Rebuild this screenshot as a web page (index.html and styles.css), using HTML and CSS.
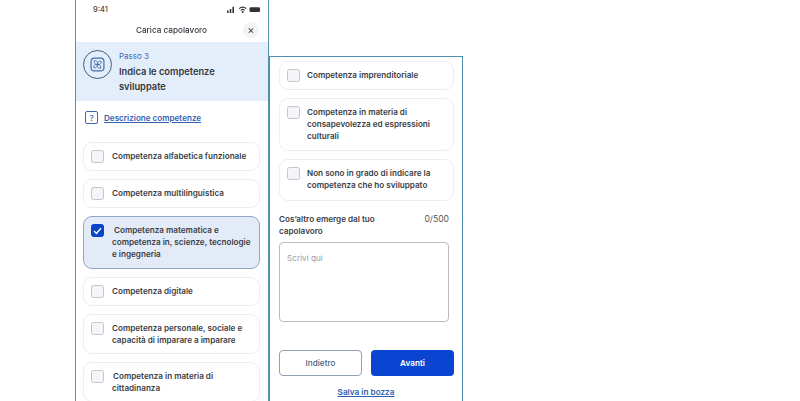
FILE: index.html
```html
<!DOCTYPE html>
<html lang="it">
<head>
<meta charset="utf-8">
<title>Carica capolavoro</title>
<link rel="stylesheet" href="styles.css">
</head>
<body>
<div class="stage">
  <section class="phone phone-left">
    <div class="status">
      <span class="time">9:41</span>
      <svg class="status-icons" width="33" height="7" viewBox="0 0 33 7">
        <rect x="0" y="4.500" width="1.600" height="2.500" fill="#333"/><rect x="2.700" y="3" width="1.600" height="4" fill="#333"/><rect x="5.400" y="0.800" width="1.600" height="6.200" fill="#333"/>
        <path d="M12.200 2.600a5 5 0 0 1 7 0M13.800 4.300a2.800 2.800 0 0 1 3.800 0" fill="none" stroke="#333" stroke-width="1.100"/><circle cx="15.700" cy="6" r="1" fill="#333"/>
        <rect x="22.500" y="1.200" width="10.500" height="4.800" rx="1.200" fill="#333"/>
      </svg>
    </div>
    <header class="title-bar">
      <h1 class="title">Carica capolavoro</h1>
      <span class="close">×</span>
    </header>
    <div class="step">
      <span class="step-ring">
        <svg width="15" height="15" viewBox="0 0 14 14" fill="none" stroke="#3f6aa8" stroke-width="1.100">
          <rect x="1" y="1" width="12" height="12" rx="3"/>
          <path d="M7 7C4.500 7 3.500 5.500 4 3.500 6 3 7.500 4.500 7 7ZM7 7C7 4.500 8.500 3.500 10.500 4 11 6 9.500 7.500 7 7ZM7 7C9.500 7 10.500 8.500 10 10.500 8 11 6.500 9.500 7 7ZM7 7C7 9.500 5.500 10.500 3.500 10 3 8 4.500 6.500 7 7Z" stroke-width=".8"/>
        </svg>
      </span>
      <div class="step-text">
        <p class="step-num">Passo 3</p>
        <h2 class="step-title">Indica le competenze sviluppate</h2>
      </div>
    </div>
    <a class="desc-link">
      <span class="help">?</span>
      <span class="link-text">Descrizione competenze</span>
    </a>
    <ul class="cards cards-left">
      <li class="card"><span class="check"></span><span class="label">Competenza alfabetica funzionale</span></li>
      <li class="card"><span class="check"></span><span class="label">Competenza multilinguistica</span></li>
      <li class="card card-selected">
        <span class="check check-on"><svg width="9" height="8" viewBox="0 0 9 8"><path d="M1 4l2.400 2.400L8 1.200" fill="none" stroke="#fff" stroke-width="1.400"/></svg></span>
        <span class="label label-indent">Competenza matematica e competenza in, scienze, tecnologie e ingegneria</span>
      </li>
      <li class="card"><span class="check"></span><span class="label">Competenza digitale</span></li>
      <li class="card"><span class="check"></span><span class="label">Competenza personale, sociale e capacità di imparare a imparare</span></li>
      <li class="card"><span class="check"></span><span class="label label-nudge">Competenza in materia di cittadinanza</span></li>
    </ul>
  </section>

  <section class="phone phone-right">
    <ul class="cards cards-right">
      <li class="card"><span class="check"></span><span class="label">Competenza imprenditoriale</span></li>
      <li class="card"><span class="check"></span><span class="label">Competenza in materia di consapevolezza ed espressioni culturali</span></li>
      <li class="card card-last"><span class="check"></span><span class="label">Non sono in grado di indicare la competenza che ho sviluppato</span></li>
    </ul>
    <div class="field-head">
      <span class="field-label">Cos’altro emerge dal tuo capolavoro</span>
      <span class="counter">0/500</span>
    </div>
    <div class="textarea">Scrivi qui</div>
    <div class="buttons">
      <button class="btn btn-ghost">Indietro</button>
      <button class="btn btn-primary">Avanti</button>
    </div>
    <a class="draft">Salva in bozza</a>
  </section>
</div>
</body>
</html>
```
FILE: styles.css
```css
* { box-sizing: border-box; margin: 0; padding: 0; }
html, body { width: 800px; height: 401px; overflow: hidden; background: #fff; }
body { font-family: Inter, "Liberation Sans", sans-serif; color: #33363d; }
ul { list-style: none; }

.stage { display: flex; align-items: flex-start; padding-left: 75px; height: 401px; overflow: hidden; filter: blur(.35px); }

.phone { width: 194px; height: 420px; border: 1.5px solid #4f8fb0; border-top: 0; background: #fff; flex: none; }
.phone-right { margin-top: 56px; border-top: 1.5px solid #4f8fb0; }

.status { display: flex; justify-content: space-between; align-items: center; height: 18px; padding: 0 8px 0 17px; }
.time { font-size: 7.500px; font-weight: 500; color: #444; }

.title-bar { position: relative; height: 24px; display: flex; align-items: center; justify-content: center; }
.title { font-size: 8.200px; font-weight: 500; color: #33363d; margin-left: -1px; }
.close { position: absolute; right: 9px; top: 4px; width: 16px; height: 16px; border-radius: 50%; background: #f3f4f6; display: flex; align-items: center; justify-content: center; font-size: 11px; color: #444; }

.step { display: flex; gap: 7px; height: 59px; background: #e4eefa; padding: 8px 8px 0 7px; }
.step-ring { width: 29px; height: 29px; border: 1.200px solid #3e5f80; border-radius: 50%; display: flex; align-items: center; justify-content: center; flex: none; }
.step-num { font-size: 8px; line-height: 12px; color: #3f68b4; }
.step-title { font-size: 9.300px; line-height: 15px; font-weight: 600; color: #33363d; width: 125px; margin-top: 1.500px; }

.desc-link { display: flex; align-items: center; gap: 6px; height: 13px; margin: 10px 0 18px 9px; }
.help { width: 13px; height: 13px; border: 1px solid #3f68b4; border-radius: 2px; display: flex; align-items: center; justify-content: center; font-size: 8px; font-weight: 500; color: #3f68b4; }
.link-text { font-size: 8.100px; font-weight: 600; color: #2f5fae; text-decoration: underline; }

.cards { display: flex; flex-direction: column; gap: 8px; }
.cards-left { margin-left: 7px; width: 177px; }
.cards-right { margin: 4px 0 0 9px; width: 175px; }

.card { display: flex; gap: 8px; padding: 7px; border: 1px solid #eceef1; border-radius: 9px; background: #fff; min-height: 29px; align-items: flex-start; }
.cards-right .card { gap: 7px; }
.card-selected { background: #e3ebf9; border-color: #8fa6c4; }
.card-last { padding-bottom: 9px; }

.check { width: 13px; height: 13px; border: 1px solid #c3c6cd; border-radius: 2.500px; background: #f5f5f9; flex: none; display: flex; align-items: center; justify-content: center; }
.check-on { background: #0b44c8; border-color: #0b44c8; }

.label { font-size: 8.150px; line-height: 12.200px; font-weight: 600; color: #3a3d44; }
.label-indent { text-indent: 2px; }
.label-nudge { text-indent: 1px; }

.field-head { display: flex; justify-content: space-between; margin: 12px 13px 0 9px; font-size: 8.150px; line-height: 12px; }
.field-label { width: 115px; font-weight: 600; color: #3a3d44; }
.counter { font-size: 8.600px; font-weight: 400; color: #555; }

.textarea { margin: 5px 0 0 9px; width: 170px; height: 80px; border: 1px solid #b9bcc3; border-radius: 4px; padding: 9px 7px; font-size: 8.200px; line-height: 12px; color: #9b9ca3; }

.buttons { display: flex; gap: 9px; margin: 28px 0 0 9px; }
.btn { width: 83px; height: 26px; border-radius: 4px; font-family: inherit; font-size: 8.200px; font-weight: 600; }
.btn-ghost { background: #fff; border: 1px solid #8fa0b4; color: #3f5f88; font-weight: 500; }
.btn-primary { background: #0a45d2; border: 0; color: #fff; }

.draft { display: block; margin-top: 11px; text-align: center; font-size: 8.200px; font-weight: 600; color: #2f5fae; text-decoration: underline; }
```
